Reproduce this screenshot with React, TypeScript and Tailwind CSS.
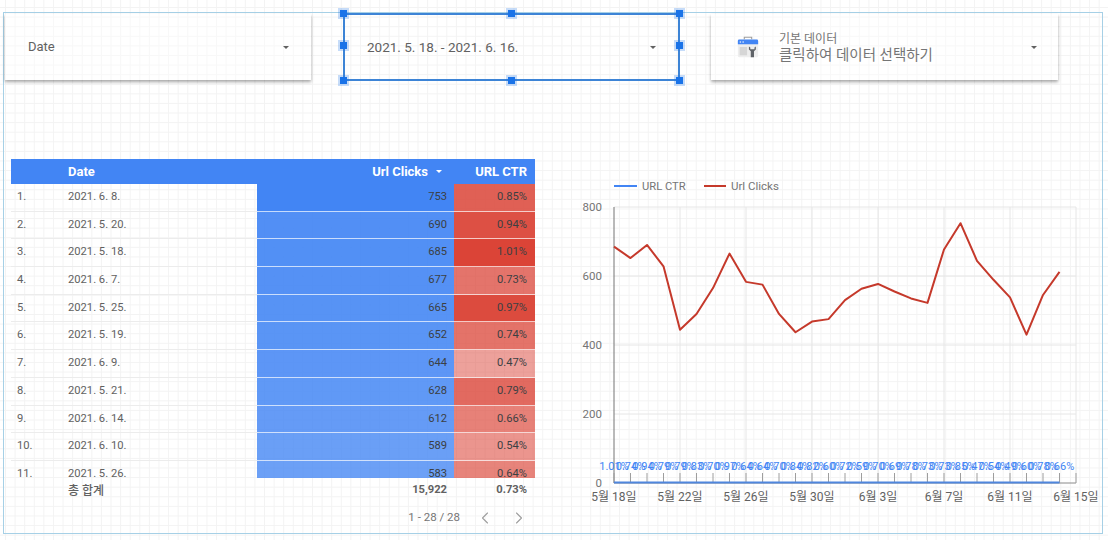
import { ChevronLeft, ChevronRight } from "lucide-react"

const rows = [
  { date: "2021. 6. 8.", clicks: 753, ctr: 0.85 },
  { date: "2021. 5. 20.", clicks: 690, ctr: 0.94 },
  { date: "2021. 5. 18.", clicks: 685, ctr: 1.01 },
  { date: "2021. 6. 7.", clicks: 677, ctr: 0.73 },
  { date: "2021. 5. 25.", clicks: 665, ctr: 0.97 },
  { date: "2021. 5. 19.", clicks: 652, ctr: 0.74 },
  { date: "2021. 6. 9.", clicks: 644, ctr: 0.47 },
  { date: "2021. 5. 21.", clicks: 628, ctr: 0.79 },
  { date: "2021. 6. 14.", clicks: 612, ctr: 0.66 },
  { date: "2021. 6. 10.", clicks: 589, ctr: 0.54 },
  { date: "2021. 5. 26.", clicks: 583, ctr: 0.64 },
]

// daily clicks from 5/18 to 6/14
const clicks = [685, 652, 690, 628, 444, 490, 565, 665, 583, 575, 490, 437, 468, 475, 530, 563, 577, 555, 535, 522, 677, 753, 644, 589, 538, 430, 545, 612]
const ctrLabels = ["1.01%", "0.74%", "0.94%", "0.79%", "0.79%", "0.83%", "0.70%", "0.97%", "0.64%", "0.64%", "0.70%", "0.84%", "0.82%", "0.60%", "0.72%", "0.59%", "0.70%", "0.69%", "0.78%", "0.73%", "0.73%", "0.85%", "0.47%", "0.54%", "0.49%", "0.60%", "0.78%", "0.66%"]
const xLabels = ["5월 18일", "5월 22일", "5월 26일", "5월 30일", "6월 3일", "6월 7일", "6월 11일", "6월 15일"]

const font = "font-['Roboto','Noto_Sans_CJK_KR',sans-serif]"

function Caret({ className = "border-t-[#616161]" }: { className?: string }) {
  return <span className={`w-0 h-0 border-x-[3.5px] border-x-transparent border-t-[3.5px] ${className}`} />
}

function Handle({ className }: { className: string }) {
  return <span className={`absolute w-[7px] h-[7px] bg-[#1a73e8] outline-2 outline-[#1a73e8]/25 ${className}`} />
}

function SearchConsoleIcon() {
  return (
    <svg width="24" height="26" viewBox="0 0 26 28">
      <path d="M9 6V3.500h8V6" fill="none" stroke="#9e9e9e" strokeWidth="1.2" />
      <rect x="2" y="6" width="22" height="19" rx="1.5" fill="#eeeeee" />
      <path d="M2 7.500A1.500 1.500 0 0 1 3.500 6h19A1.500 1.500 0 0 1 24 7.500V11H2z" fill="#4285f4" />
      <rect x="4" y="8" width="1.500" height="1.200" fill="#fff" />
      <rect x="7" y="8" width="1.500" height="1.200" fill="#fff" />
      <rect x="4" y="14" width="8" height="9" fill="#d6d6d6" />
      <path d="M14 13.500v3.200l2 2V25h3.500v-6.300l2-2v-3.200l-1.500 1v2h-4.500v-2z" fill="#5f6368" />
    </svg>
  )
}

function Chart() {
  const px = (i: number) => 39 + i * 16.5
  const py = (v: number) => 31 + (800 - v) * 0.345
  const line = clicks.map((v, i) => `${px(i)},${py(v)}`).join(" ")
  return (
    <svg width="528" height="340" viewBox="0 0 528 340" className={`ml-[40px] mt-[17px] shrink-0 ${font}`}>
      <line x1="39" x2="62" y1="10" y2="10" stroke="#4285f4" strokeWidth="2" />
      <text x="67" y="14" fontSize="11.2" fill="#757575">URL CTR</text>
      <line x1="129" x2="151" y1="10" y2="10" stroke="#c5392b" strokeWidth="2" />
      <text x="156" y="14" fontSize="11.5" fill="#757575">Url Clicks</text>

      {[800, 600, 400, 200].map(v => (
        <line key={v} x1="39" x2="501" y1={py(v)} y2={py(v)} stroke="#e6e6e6" />
      ))}
      {xLabels.map((_, i) => i > 0 && (
        <line key={i} x1={px(i * 4)} x2={px(i * 4)} y1="31" y2="307" stroke="#e6e6e6" />
      ))}
      {[800, 600, 400, 200, 0].map(v => (
        <text key={v} x="27" y={py(v) + 4} fontSize="11.5" textAnchor="end" fill="#757575">{v}</text>
      ))}
      <line x1="39" x2="39" y1="31" y2="307" stroke="#757575" />
      <line x1="39" x2="501" y1="307" y2="307" stroke="#8a8a8a" />
      {Array.from({ length: 29 }, (_, i) => (
        <line key={i} x1={px(i)} x2={px(i)} y1="297" y2="307" stroke="#9e9e9e" />
      ))}
      <line x1="39" x2={px(27)} y1="306.5" y2="306.5" stroke="#4f86dd" strokeWidth="2" />
      {ctrLabels.map((t, i) => (
        <text key={i} x={px(i)} y="294" fontSize="11" textAnchor="middle" fill="#4285f4">{t}</text>
      ))}
      <polyline points={line} fill="none" stroke="#c5392b" strokeWidth="2" strokeLinejoin="round" />
      {xLabels.map((t, i) => (
        <text key={t} x={px(i * 4)} y="325" fontSize="12" textAnchor="middle" fill="#616161">{t}</text>
      ))}
    </svg>
  )
}

export default function App() {
  return (
    <div
      className={`w-[1108px] h-[540px] overflow-hidden pt-3 pl-[3px] bg-white bg-[linear-gradient(#f3f3f3_1px,transparent_1px),linear-gradient(90deg,#f3f3f3_1px,transparent_1px)] bg-[size:9.6px_9.6px] bg-[position:5px_7px] ${font}`}
    >
      <div className="w-[1100px] h-[522px] border border-[#a6d0e6]">
        {/* controls */}
        <div className="flex items-start pl-px">
          <div className="w-[306px] h-[66px] mt-px flex items-center justify-between pl-[23px] pr-[22px] bg-white/40 shadow-[0_2px_3px_rgba(0,0,0,0.35)] text-[13px] text-[#616161]">
            <span>Date</span>
            <Caret />
          </div>
          <div className="relative w-[337px] h-[68px] ml-[32px] flex items-center justify-between pl-[22px] pr-[22px] border-2 border-[#3d84d6] text-[13.5px] text-[#616161]">
            <span>2021. 5. 18. - 2021. 6. 16.</span>
            <Caret />
            <Handle className="-left-[5px] -top-[5px]" />
            <Handle className="left-[163px] -top-[5px]" />
            <Handle className="-right-[5px] -top-[5px]" />
            <Handle className="-left-[5px] top-[27px]" />
            <Handle className="-right-[5px] top-[27px]" />
            <Handle className="-left-[5px] -bottom-[5px]" />
            <Handle className="left-[163px] -bottom-[5px]" />
            <Handle className="-right-[5px] -bottom-[5px]" />
          </div>
          <div className="w-[347px] h-[66px] ml-[31px] mt-px flex items-center pl-[25px] pr-[21px] bg-white/40 shadow-[0_2px_3px_rgba(0,0,0,0.35)] text-[#757575]">
            <SearchConsoleIcon />
            <div className="ml-[19px] pt-[3px] flex flex-col flex-1">
              <span className="text-[12px] leading-[14px]">기본 데이터</span>
              <span className="text-[14.5px] leading-[19px]">클릭하여 데이터 선택하기</span>
            </div>
            <Caret />
          </div>
        </div>

        <div className="flex items-start mt-[78px]">
          {/* table */}
          <div className="w-[524px] ml-[7px] shrink-0 text-[11.2px] text-[#616161]">
            <div className="h-[25px] flex items-center bg-[#4285f4] text-white font-bold text-[13px]">
              <span className="w-[246px] pl-[57px]">Date</span>
              <span className="w-[197px] flex items-center justify-end gap-2 pr-3">
                Url Clicks
                <Caret className="border-t-white" />
              </span>
              <span className="w-[81px] text-right pr-2">URL CTR</span>
            </div>
            <div className="h-[294px] overflow-hidden">
              {rows.map((r, i) => (
                <div key={r.date} className="h-[27.7px] flex border-b border-[#ececec]">
                  <span className="w-[57px] pl-[6px] pt-[5px]">{i + 1}.</span>
                  <span className="w-[189px] pt-[5px]">{r.date}</span>
                  <span
                    className="w-[197px] pr-[7px] pt-[5px] text-right text-[#3c4043] border-b border-white/70 -mb-px"
                    style={{ backgroundColor: `rgba(66,133,244,${0.78 + ((r.clicks - 583) / 170) * 0.22})` }}
                  >
                    {r.clicks}
                  </span>
                  <span
                    className="w-[81px] pr-2 pt-[5px] text-right text-[#3c4043] border-b border-white/70 -mb-px"
                    style={{ backgroundColor: `rgba(219,68,55,${0.5 + ((r.ctr - 0.47) / 0.54) * 0.5})` }}
                  >
                    {r.ctr.toFixed(2)}%
                  </span>
                </div>
              ))}
            </div>
            <div className="h-[25px] flex items-center font-bold">
              <span className="w-[57px]" />
              <span className="w-[189px] font-medium text-[12px]">총 합계</span>
              <span className="w-[197px] pr-[7px] text-right">15,922</span>
              <span className="w-[81px] pr-2 text-right">0.73%</span>
            </div>
            <div className="flex items-center justify-end h-[30px] pr-[6px] text-[#757575] text-[11.5px]">
              <span>1 - 28 / 28</span>
              <ChevronLeft className="ml-[15px] text-[#9e9e9e]" size={20} strokeWidth={1.3} />
              <ChevronRight className="ml-[14px] text-[#9e9e9e]" size={20} strokeWidth={1.3} />
            </div>
          </div>
          <Chart />
        </div>
      </div>
    </div>
  )
}
